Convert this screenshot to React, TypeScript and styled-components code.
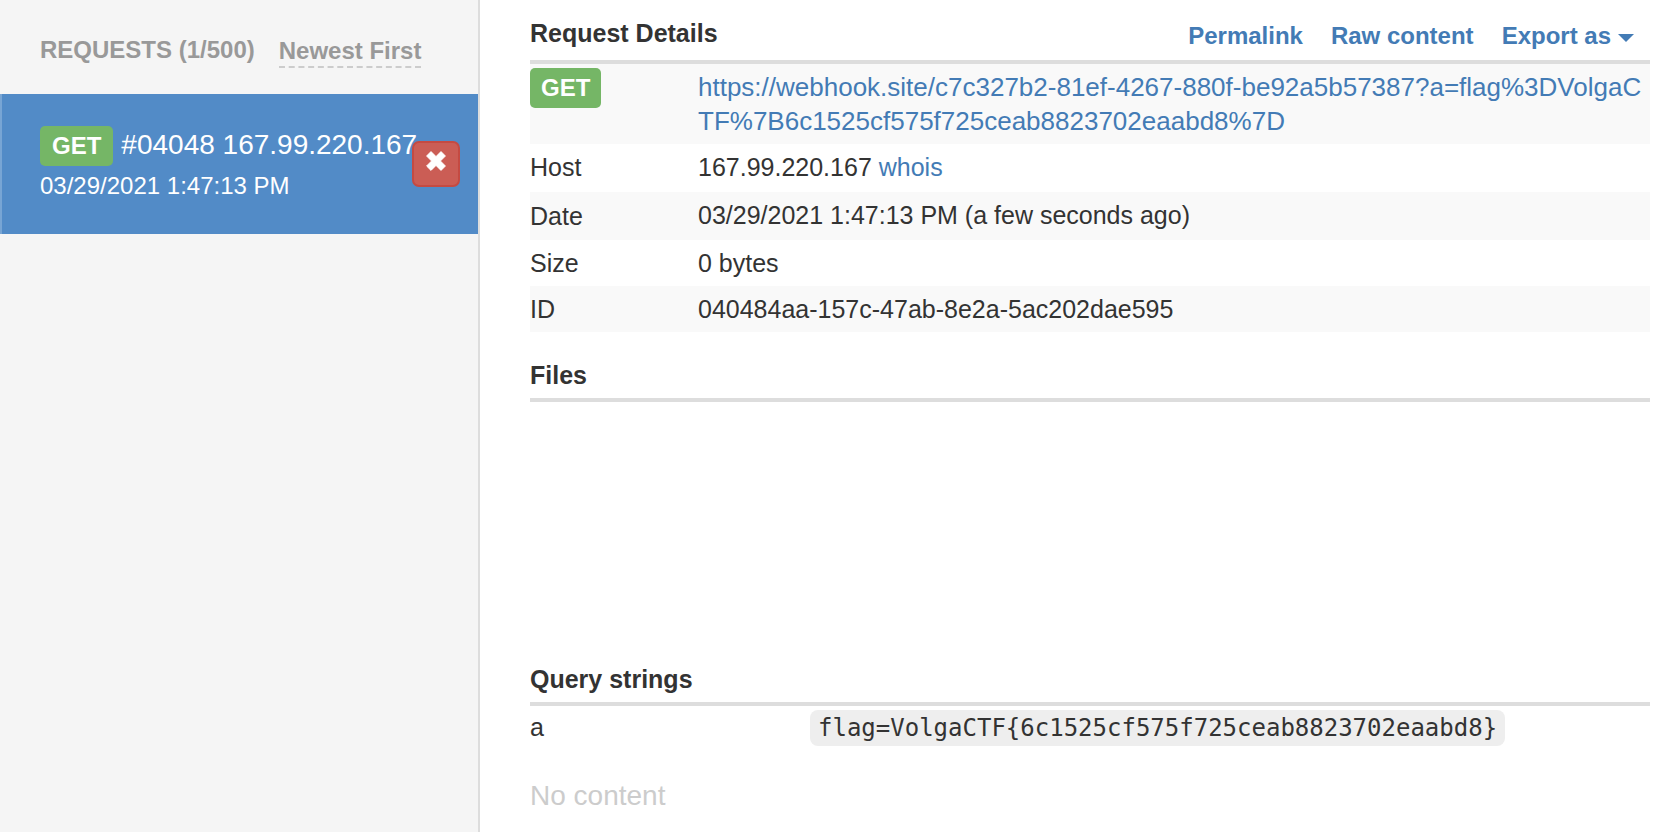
import React from "react";
import styled, { createGlobalStyle } from "styled-components";

const GlobalStyle = createGlobalStyle`
  *, *::before, *::after { box-sizing: border-box; }
  body {
    margin: 0;
    background: #fff;
    color: #333;
    font-family: "Liberation Sans", Arial, sans-serif;
    font-size: 24px;
    line-height: 34px;
  }
`;

const Page = styled.div`
  display: flex;
  min-height: 100vh;
`;

const Sidebar = styled.aside`
  flex: 0 0 480px;
  background: #f5f5f5;
  border-right: 2px solid #ddd;
`;

const SidebarHeader = styled.header`
  display: flex;
  align-items: flex-start;
  gap: 24px;
  padding: 33px 40px 26px;
  color: #999;
`;

const SidebarTitle = styled.h2`
  margin: 0;
  font-size: 24px;
  line-height: 34px;
  font-weight: bold;
`;

const SortButton = styled.button`
  margin: 3px 0 0;
  padding: 0;
  border: 0;
  border-bottom: 2px dashed #ccc;
  background: none;
  color: inherit;
  font: bold 24px/30px "Liberation Sans", Arial, sans-serif;
  cursor: pointer;
`;

const RequestList = styled.ul`
  margin: 0;
  padding: 0;
  list-style: none;
`;

const RequestItem = styled.li`
  position: relative;
  height: 140px;
  padding: 32px 0 24px 38px;
  border-left: 2px solid #78a5d4;
  background: #528bc7;
  color: #fff;
`;

const RequestLink = styled.a`
  display: block;
  color: inherit;
  text-decoration: none;
  white-space: nowrap;
`;

const RequestName = styled.span`
  display: flex;
  align-items: flex-start;
  gap: 8px;
  font-size: 28px;
  line-height: 38px;
`;

const RequestTime = styled.span`
  display: block;
  line-height: 40px;
`;

const Method = styled.span<{ $inset: number }>`
  display: inline-block;
  padding: 2px ${(p) => p.$inset}px;
  border-radius: 5px;
  background: #75b666;
  color: #fff;
  font-size: 24px;
  font-weight: bold;
  line-height: 36px;
  vertical-align: top;
`;

const DeleteButton = styled.button`
  position: absolute;
  top: 47px;
  right: 18px;
  width: 48px;
  height: 46px;
  display: flex;
  justify-content: center;
  padding: 8px 0 0;
  border: 2px solid #c54a42;
  border-radius: 7px;
  background: #cb5d55;
  cursor: pointer;
`;

const Main = styled.main`
  flex: 1;
  min-width: 0;
  padding: 0 30px 0 50px;
`;

const SectionHead = styled.header<{ $tall?: boolean }>`
  display: flex;
  justify-content: space-between;
  padding: ${(p) => (p.$tall ? "16px 16px 10px 0" : "0 0 6px")};
  border-bottom: 4px solid #ddd;
`;

const SectionTitle = styled.h3`
  margin: 0;
  font-size: 25px;
  line-height: 34px;
  font-weight: bold;
`;

const Actions = styled.nav`
  display: flex;
  gap: 28px;
  height: 34px;
  padding-top: 3px;
`;

const ActionLink = styled.a`
  color: #437bb5;
  font-weight: bold;
  text-decoration: none;
`;

const ExportButton = styled.button`
  display: flex;
  align-items: center;
  gap: 7px;
  height: 34px;
  padding: 0;
  border: 0;
  background: none;
  color: #437bb5;
  font: bold 24px/34px "Liberation Sans", Arial, sans-serif;
  cursor: pointer;
`;

const Caret = styled.span`
  margin-top: 4px;
  border: 8px solid transparent;
  border-top-color: currentColor;
  border-bottom: 0;
`;

const DataTable = styled.table`
  width: 100%;
  table-layout: fixed;
  border-collapse: collapse;
  font-size: 25px;
`;

const Row = styled.tr<{ $tall?: boolean; $striped?: boolean }>`
  height: ${(p) => (p.$tall ? 48 : 46)}px;
  background: ${(p) => (p.$striped ? "#f9f9f9" : "transparent")};
`;

const Label = styled.th<{ $width?: string; $pad?: number; $align?: string }>`
  width: ${(p) => p.$width ?? "15%"};
  padding: ${(p) => p.$pad ?? 6}px 0;
  font-weight: normal;
  text-align: left;
  vertical-align: ${(p) => p.$align ?? "top"};
`;

const Value = styled.td<{ $pad?: number }>`
  padding: ${(p) => p.$pad ?? 6}px 0;
  vertical-align: top;
  word-break: break-all;
`;

const TextLink = styled.a`
  color: #437bb5;
  text-decoration: none;
`;

const UrlLink = styled(TextLink)`
  display: block;
  font-size: 26px;
`;

const Files = styled.section`
  min-height: 304px;
  margin-top: 26px;
`;

const Code = styled.code`
  display: inline-block;
  padding: 0 8px;
  border-radius: 8px;
  background: #eee;
  font-family: "DejaVu Sans Mono", monospace;
  font-size: 24px;
  line-height: 36px;
  vertical-align: top;
`;

const Empty = styled.p`
  margin: 24px 0 0;
  color: #ccc;
  font-size: 28px;
  line-height: 40px;
`;

export default function App() {
  return (
    <Page>
      <GlobalStyle />
      <Sidebar>
        <SidebarHeader>
          <SidebarTitle>REQUESTS (1/500)</SidebarTitle>
          <SortButton type="button">Newest First</SortButton>
        </SidebarHeader>
        <RequestList>
          <RequestItem>
            <RequestLink href="#04048">
              <RequestName>
                <Method $inset={12}>GET</Method>
                #04048 167.99.220.167
              </RequestName>
              <RequestTime>03/29/2021 1:47:13 PM</RequestTime>
            </RequestLink>
            <DeleteButton type="button" aria-label="Delete request">
              <svg width="20" height="20" viewBox="0 0 20 20" aria-hidden="true">
                <path
                  d="M5 0.6 10 5.6 15 0.6 19.4 5 14.4 10 19.4 15 15 19.4 10 14.4 5 19.4 0.6 15 5.6 10 0.6 5Z"
                  fill="#fff"
                  stroke="#fff"
                  strokeLinejoin="round"
                />
              </svg>
            </DeleteButton>
          </RequestItem>
        </RequestList>
      </Sidebar>
      <Main>
        <section>
          <SectionHead $tall>
            <SectionTitle>Request Details</SectionTitle>
            <Actions>
              <ActionLink href="#permalink">Permalink</ActionLink>
              <ActionLink href="#raw">Raw content</ActionLink>
              <ExportButton type="button">
                Export as
                <Caret />
              </ExportButton>
            </Actions>
          </SectionHead>
          <DataTable>
            <tbody>
              <Row $striped>
                <Label scope="row" $pad={4}>
                  <Method $inset={11}>GET</Method>
                </Label>
                <Value>
                  <UrlLink href="#request">
                    https://webhook.site/c7c327b2-81ef-4267-880f-be92a5b57387?a=flag%3DVolgaCTF%7B6c1525cf575f725ceab8823702eaabd8%7D
                  </UrlLink>
                </Value>
              </Row>
              <Row $tall>
                <Label scope="row">Host</Label>
                <Value>
                  167.99.220.167 <TextLink href="#whois">whois</TextLink>
                </Value>
              </Row>
              <Row $tall $striped>
                <Label scope="row" $align="middle">Date</Label>
                <Value>03/29/2021 1:47:13 PM (a few seconds ago)</Value>
              </Row>
              <Row>
                <Label scope="row">Size</Label>
                <Value>0 bytes</Value>
              </Row>
              <Row $striped>
                <Label scope="row">ID</Label>
                <Value>040484aa-157c-47ab-8e2a-5ac202dae595</Value>
              </Row>
            </tbody>
          </DataTable>
        </section>
        <Files>
          <SectionHead>
            <SectionTitle>Files</SectionTitle>
          </SectionHead>
        </Files>
        <section>
          <SectionHead>
            <SectionTitle>Query strings</SectionTitle>
          </SectionHead>
          <DataTable>
            <tbody>
              <Row>
                <Label scope="row" $width="25%" $pad={4}>a</Label>
                <Value $pad={4}>
                  <Code>flag=VolgaCTF&#123;6c1525cf575f725ceab8823702eaabd8&#125;</Code>
                </Value>
              </Row>
            </tbody>
          </DataTable>
          <Empty>No content</Empty>
        </section>
      </Main>
    </Page>
  );
}
